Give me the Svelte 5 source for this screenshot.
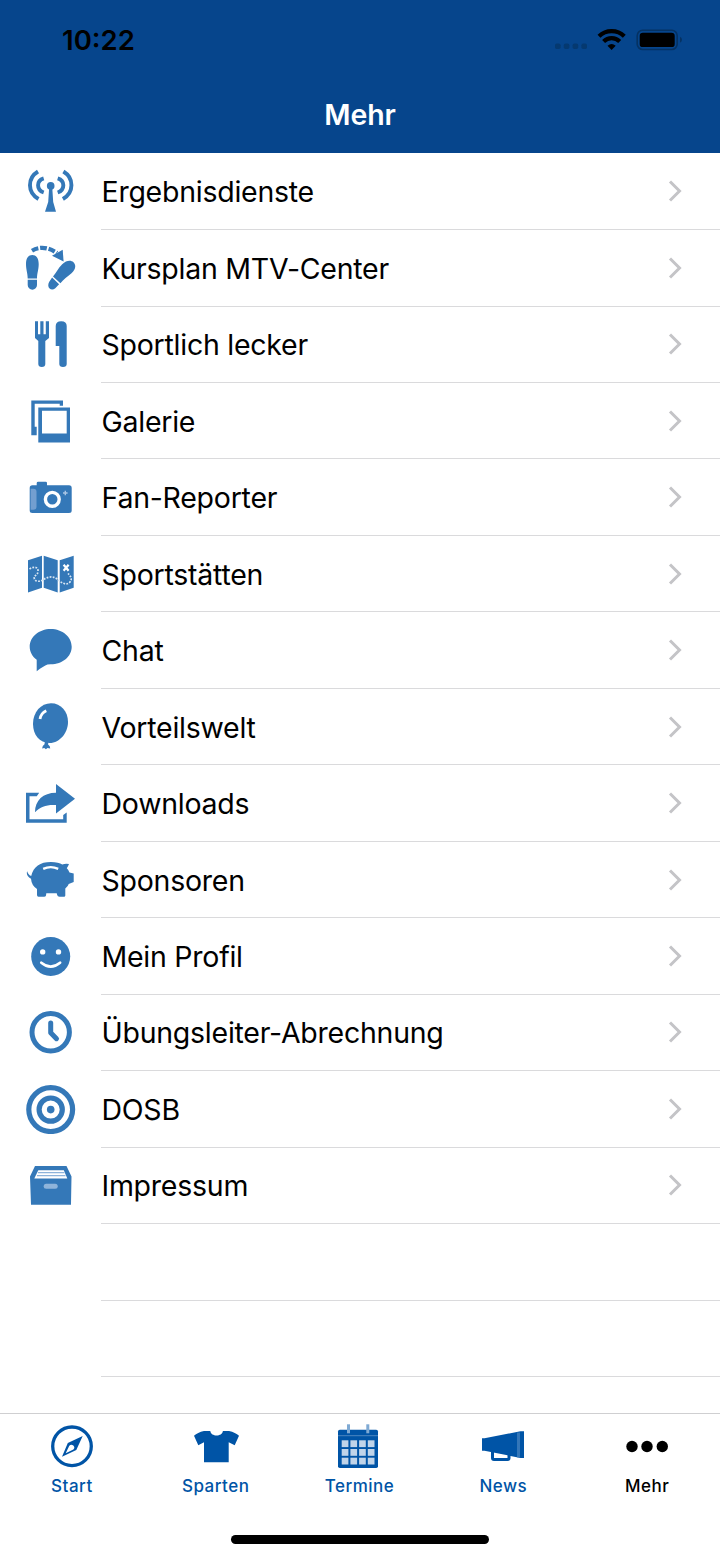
<script lang="ts">
	const items = [
		{ icon: 'antenna', label: 'Ergebnisdienste' },
		{ icon: 'steps', label: 'Kursplan MTV-Center' },
		{ icon: 'cutlery', label: 'Sportlich lecker' },
		{ icon: 'gallery', label: 'Galerie' },
		{ icon: 'camera', label: 'Fan-Reporter' },
		{ icon: 'map', label: 'Sportstätten' },
		{ icon: 'chat', label: 'Chat' },
		{ icon: 'balloon', label: 'Vorteilswelt' },
		{ icon: 'share', label: 'Downloads' },
		{ icon: 'pig', label: 'Sponsoren' },
		{ icon: 'smiley', label: 'Mein Profil' },
		{ icon: 'clock', label: 'Übungsleiter-Abrechnung' },
		{ icon: 'target', label: 'DOSB' },
		{ icon: 'box', label: 'Impressum' }
	];

	const tabs = [
		{ icon: 'compass', label: 'Start' },
		{ icon: 'shirt', label: 'Sparten' },
		{ icon: 'calendar', label: 'Termine' },
		{ icon: 'megaphone', label: 'News' },
		{ icon: 'more', label: 'Mehr' }
	];

	let active = $state('Mehr');
</script>

{#snippet glyph(name: string)}
	<svg class="glyph" width="50" height="50" viewBox="0 0 50 50" fill="currentColor" aria-hidden="true">
		{#if name === 'antenna'}
			<circle cx="24.7" cy="19.9" r="3.8" />
			<path d="M23.2 21h3l1 15 2.8 9.8H19L22.2 36z" />
			<g fill="none" stroke="currentColor" stroke-width="3.9">
				<path d="M12 5.5C1.2 12 1.2 26.5 12.5 33" />
				<path d="M17.7 12.3C10.2 14.5 10.2 24 17.7 26.5" />
				<path d="M37.4 5.5C48.2 12 48.2 26.5 36.9 33" />
				<path d="M31.7 12.3C39.2 14.5 39.2 24 31.7 26.5" />
			</g>
		{:else if name === 'steps'}
			<path d="M0 21C0 15 2.5 12 6.3 12S12.7 15 12.7 21C12.7 27 11 30 11 35.6H1.7C1.7 30 0 27 0 21z" />
			<path d="M1.7 36.8H11V42a4.65 4.65 0 0 1-9.3 0z" />
			<path d="M27 33.5C30.4 29.4 32 25.5 36.2 21.3C40.4 17.1 44.9 16.8 47.5 19.2C50.3 22 49.8 26.3 45.5 30.2C41.3 34 37.7 36 34.4 40.3z" />
			<path d="M26.1 34.6 33.1 41.2 29.3 45.2C27.4 47 25 47 23.6 45.5C21.9 43.9 21.9 41.2 23.1 38.9z" />
			<path d="M6 7.7Q17.500 1 31 10" fill="none" stroke="currentColor" stroke-width="4.2" stroke-dasharray="6.8 1.8" />
			<path d="M36.7 6.800 37.6 18.5 26 12.7z" />
		{:else if name === 'cutlery'}
			<path d="M9 2.2h3v13h2.3v-13h3.2v13h2.3v-13H23V19l-3.7 3V45q0 3-3.5 3t-3.5-3V22L9 19z" />
			<path d="M29.7 26.9V7q0-4.8 5.5-4.8T40.7 7V45q0 3-3.7 3t-3.7-3V26.9z" />
		{:else if name === 'gallery'}
			<path d="M5.3 4.4H37v5.3h-3.3V7.7H8.7V30.7h2v8.5H5.3z" />
			<path fill-rule="evenodd" d="M12.3 11.4H44v35H12.3zM16 14.7V37.4H40.7V14.7z" />
		{:else if name === 'camera'}
			<path d="M10.7 13.3V11q0-1.3 1.5-1.3h7.5Q21 9.7 21 11v2.3H43q2.7 0 2.7 2.7V38.5Q45.7 41 43 41H6.4Q3.7 41 3.7 38.5V16q0-2.7 2.7-2.7z" />
			<path fill="#739fd0" d="M4.6 16.7h2.9q3 0 3 3v15q0 3-3 3H4.600z" />
			<circle cx="26.3" cy="27.3" r="6.9" fill="none" stroke="#fff" stroke-width="3.4" />
			<path d="M39.3 18.7v4.6M37 21h4.6" stroke="#a9c5e4" stroke-width="1.4" />
		{:else if name === 'map'}
			<path d="M2 11.2 16 6.8v32L2 43.5zM17.7 6.8l14 4.4v32.3l-14-4.7zM33.7 11.2l14-4.4v32l-14 4.7z" />
			<path d="M3.5 20C8 17 12.5 18 12 22.5S7.5 26 8.3 29.5S14 33 17.5 30.5S27 26.5 31 30S40 37 43.5 33.5S44.5 27 42 24.5" fill="none" stroke="#d9e6f3" stroke-width="1.7" stroke-dasharray="1.8 1.3" />
			<path d="m37.6 15.8 5 6m0-6-5 6" stroke="#fff" stroke-width="2.2" />
		{:else if name === 'chat'}
			<path d="M24.7 4C36.5 4 45.7 12 45.7 21.7S36.5 39.3 24.7 39.3q-2.2 0-3.2.3Q17.5 41 10.7 46.3V34.8C6.5 31.5 3.7 27 3.7 21.7C3.7 12 13 4 24.7 4z" />
		{:else if name === 'balloon'}
			<path d="M25 2.3C35 2.3 42 10.5 42 21S34 42 23.5 42C13.5 42 7 33.5 7 23C7 11 15 2.3 25 2.3z" />
			<path d="M18.8 41h3.600l-.3 2.4q2.300 1.300 2.100 4l-2.700-.4-1.6 1.300-1.600-1.200-2.200.4q.2-2.800 2.400-4.200z" />
			<path d="M14 18Q15 12 20.3 9.7" fill="none" stroke="#fff" stroke-width="2.8" />
		{:else if name === 'share'}
			<path d="M0 14.8H13.2L10.8 18.2H3.5V41.3H37.2V36.9L40.7 34.5V44.8H0z" />
			<path d="M30 6.1 49 20.8 30 35.5V27.1C21 26.5 14.5 28.5 9 34.3C9 22.5 17 14.8 30 14.8z" />
		{:else if name === 'pig'}
			<path d="M1.3 17.2Q1.8 20.5 5.2 22C7.5 12.5 14 8 25 8C30 8 34 9.2 36.3 10.5Q39.3 9.3 43 10Q42 12.5 40.8 14.3Q43 16.5 43.5 18.4L47.7 19.5V28L42.7 30Q42 32.5 39.3 34.5V41.5Q39.3 42.7 38 42.7H33.5Q31.5 42.7 31.2 41L30.7 39.3H20.3L20 41.5Q19.7 42.7 18 42.7H12.5Q11 42.7 11 41V35Q5.500 31.5 5 24.800Q.7 22.5.8 18.5z" />
			<path d="M17.2 14.9q7.500-3.4 15 0" fill="none" stroke="#fff" stroke-width="2.3" />
		{:else if name === 'smiley'}
			<circle cx="24.7" cy="25.5" r="19.5" />
			<g fill="#fff">
				<circle cx="16.7" cy="20.9" r="2.7" />
				<circle cx="32.5" cy="20.9" r="2.7" />
			</g>
			<path d="M15.3 31.7q9.4 7.7 18.8 0" fill="none" stroke="#fff" stroke-width="2.7" stroke-linecap="round" />
		{:else if name === 'clock'}
			<g fill="none" stroke="currentColor" stroke-width="5">
				<circle cx="24.7" cy="25.2" r="18.7" />
				<path d="M24.7 16v9.7l5.800 6" stroke-linecap="round" stroke-linejoin="round" />
			</g>
		{:else if name === 'target'}
			<circle cx="24.7" cy="25.6" r="3.8" />
			<g fill="none" stroke="currentColor" stroke-width="5.2">
				<circle cx="24.7" cy="25.6" r="21.9" />
				<circle cx="24.7" cy="25.6" r="11.6" />
			</g>
		{:else if name === 'box'}
			<path d="M9 6.1H40.5L45.5 16.5 45 43.5v1.3H5L4 16.5z" />
			<path fill="#fff" d="M12.3 10.2H37.8L41.3 18.5H8.3z" />
			<path d="M12 12.7h26.5M11 15.7h28.5" stroke="#8db3da" stroke-width="1.3" />
			<rect x="17.7" y="23.7" width="14" height="5" rx="2.5" fill="#8fb4da" />
		{:else if name === 'compass'}
			<circle cx="25" cy="24.3" r="19.3" fill="none" stroke="currentColor" stroke-width="3.3" />
			<path fill-rule="evenodd" d="M35.7 14 29.3 28 15 34.7 20.8 21zM22.3 23.7 18.7 31.2 26.4 27.6A2.7 2.7 0 0 0 22.3 23.7z" />
		{:else if name === 'shirt'}
			<path d="M13 9h6.3C20 15 31.2 15 31.9 9H38Q44.5 10.5 48 13.7L43.7 23.3 37.7 20.3V40.3H13V20.3L7.3 23.3 3 13.7Q6.5 10.5 13 9z" />
		{:else if name === 'calendar'}
			<rect x="4" y="7.7" width="40" height="38.3" rx="1.8" />
			<path d="M4 13.7H44" stroke="#4c86c1" />
			<g fill="#7faad4">
				<rect x="13" y="2.3" width="3" height="9" />
				<rect x="32.3" y="2.3" width="3" height="9" />
			</g>
			<g fill="#c0d4e9">
				{#each [18.3, 27, 35.7] as y}
					{#each [7.7, 16.4, 25.1, 33.8] as x}
						<rect {x} {y} width="6.7" height="6.8" />
					{/each}
				{/each}
			</g>
		{:else if name === 'megaphone'}
			<path d="M4 16.3H6.5L42.5 9.2H46V36H42.5L6.5 28.7H4z" />
			<path d="M40.5 10.5V35.3" stroke="#3376b8" stroke-width="3" />
			<path d="M14.5 29v7q0 1.5 1.5 1.5H29.5Q31 37.5 31 36V32" fill="none" stroke="currentColor" stroke-width="3" />
		{:else if name === 'more'}
			<circle cx="10" cy="24.5" r="5.7" />
			<circle cx="25" cy="24.5" r="5.7" />
			<circle cx="40.3" cy="24.5" r="5.7" />
		{/if}
	</svg>
{/snippet}

<div class="screen">
	<header class="header">
		<div class="status">
			<span class="time">10:22</span>
			<svg class="status-icons" width="128" height="24" viewBox="0 0 128 24" aria-hidden="true">
				<g fill="#053970">
					<rect x="1" y="15.5" width="5.6" height="5.6" rx="1.8" />
					<rect x="9.8" y="15.5" width="5.6" height="5.6" rx="1.8" />
					<rect x="18.6" y="15.5" width="5.6" height="5.6" rx="1.8" />
					<rect x="27.4" y="15.5" width="5.6" height="5.6" rx="1.8" />
				</g>
				<g fill="none" stroke="#000" stroke-width="4.2">
					<path d="M45 8.3a18.3 18.3 0 0 1 25.3 0" />
					<path d="M49.6 13.500a11.5 11.5 0 0 1 16.1 0" />
				</g>
				<path d="M57.6 22 53.5 17.7q4.1-3.3 8.2 0z" />
				<rect x="83.2" y="2.2" width="40" height="19.3" rx="5.5" fill="none" stroke="#053263" stroke-width="1.6" />
				<rect x="85.7" y="4.7" width="35" height="14.4" rx="3.2" />
				<path d="M126 8.8q2 .8 2 3t-2 3z" fill="#053263" />
			</svg>
		</div>
		<h1 class="title">Mehr</h1>
	</header>

	<main class="list">
		{#each items as item}
			<a class="row" href="#{item.icon}">
				{@render glyph(item.icon)}
				<span class="cell">
					<span class="label">{item.label}</span>
					<svg class="chevron" width="14" height="22" viewBox="0 0 14 22" fill="none" stroke="#c4c4c7" stroke-width="3" aria-hidden="true">
						<path d="m2 1.5 9.5 9.5L2 20.5" />
					</svg>
				</span>
			</a>
		{/each}
		<div class="row"><span class="cell empty"></span></div>
		<div class="row"><span class="cell empty"></span></div>
	</main>

	<nav class="tabbar">
		<div class="tabs">
			{#each tabs as tab}
				<button class="tab" class:active={active === tab.label} onclick={() => (active = tab.label)}>
					{@render glyph(tab.icon)}
					<span>{tab.label}</span>
				</button>
			{/each}
		</div>
		<div class="home-indicator"></div>
	</nav>
</div>

<style>
	:global(body) {
		background: #fff;
	}

	.screen {
		display: flex;
		flex-direction: column;
		width: 720px;
		height: 1558px;
		overflow: hidden;
		font-family: Inter, Roboto, sans-serif;
		color: #000;
		background: #fff;
	}

	.header {
		flex: none;
		box-sizing: border-box;
		height: 153px;
		background: #06458c;
	}

	.status {
		display: flex;
		align-items: center;
		justify-content: space-between;
		height: 79px;
		padding: 0 38px 0 62px;
	}

	.time {
		padding-top: 1px;
		font-size: 27.5px;
		font-weight: 600;
		line-height: 32px;
	}

	.title {
		margin: 18px 0 0;
		font-size: 28.5px;
		font-weight: 600;
		line-height: 36px;
		letter-spacing: -0.1px;
		text-align: center;
		color: #fff;
	}

	.list {
		flex: 1;
		min-height: 0;
		padding-top: 0.6px;
		overflow: hidden;
	}

	.row {
		display: flex;
		height: 76.47px;
		padding-left: 26px;
		color: #3478b8;
		text-decoration: none;
	}

	.row .glyph {
		flex: none;
		margin: 12.6px 25px 0 0;
	}

	.cell {
		flex: 1;
		display: flex;
		align-items: center;
		justify-content: space-between;
		box-sizing: border-box;
		padding-right: 38px;
		border-bottom: 1px solid #dadadc;
	}

	.cell.empty {
		margin-left: 75px;
	}

	.label {
		padding: 2px 0 0 0.5px;
		font-size: 28.5px;
		font-feature-settings: 'calt' 0, 'liga' 0, 'dlig' 0;
		letter-spacing: -0.25px;
		line-height: 36px;
		color: #000;
	}

	.tabbar {
		flex: none;
		box-sizing: border-box;
		display: flex;
		flex-direction: column;
		align-items: center;
		height: 145px;
		border-top: 1px solid #cfcfd1;
	}

	.tabs {
		display: grid;
		grid-template-columns: repeat(5, 143.8px);
		width: 100%;
		height: 121px;
	}

	.tab {
		display: flex;
		flex-direction: column;
		align-items: center;
		padding: 8px 0 0;
		border: none;
		background: none;
		font: 500 17px/22px Inter, Roboto, sans-serif;
		letter-spacing: 0.5px;
		color: #0054a6;
	}

	.tab span {
		margin-top: 3px;
	}

	.tab.active {
		color: #000;
	}

	.home-indicator {
		width: 258px;
		height: 9px;
		border-radius: 5px;
		background: #000;
	}
</style>
